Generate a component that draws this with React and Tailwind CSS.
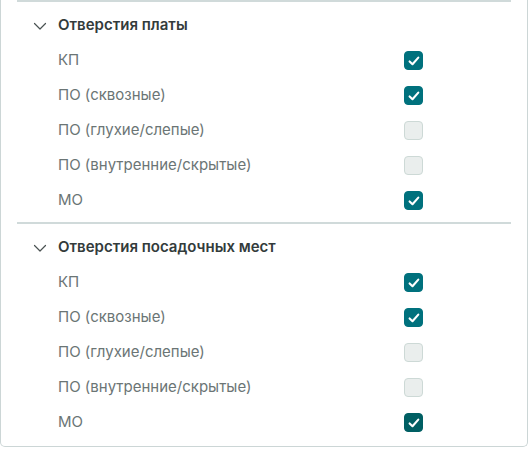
import { useState } from 'react';

const ROWS = [
  { key: 'kp', label: 'КП' },
  { key: 'through', label: 'ПО (сквозные)' },
  { key: 'blind', label: 'ПО (глухие/слепые)' },
  { key: 'buried', label: 'ПО (внутренние/скрытые)' },
  { key: 'mo', label: 'МО' },
];

const SECTIONS = [
  { id: 'board', title: 'Отверстия платы', checked: { kp: true, through: true, mo: true } },
  { id: 'footprint', title: 'Отверстия посадочных мест', checked: { kp: true, through: true, mo: true }, dark: 'mo' },
];

function Checkbox({ checked, dark, onChange }) {
  return (
    <button
      onClick={onChange}
      className={
        'w-[19px] h-[19px] rounded-[4px] flex items-center justify-center border ' +
        (checked
          ? dark
            ? 'bg-[#005f63] border-[#005f63]'
            : 'bg-[#00717d] border-[#00717d]'
          : 'bg-[#eaeeed] border-[#cdd9d6]')
      }
    >
      {checked && (
        <svg width="14" height="14" viewBox="0 0 14 14" fill="none">
          <path d="M2.6 7.4 L5.5 10.2 L11.3 3.6" stroke="white" strokeWidth="2.1" strokeLinecap="round" strokeLinejoin="round" />
        </svg>
      )}
    </button>
  );
}

function Section({ section }) {
  const [open, setOpen] = useState(true);
  const [checked, setChecked] = useState(section.checked);

  return (
    <div className="pt-[6px] pb-[4px]">
      <button
        onClick={() => setOpen(!open)}
        className="h-[35px] flex items-center pl-[32px] gap-[11px] text-[15px] font-semibold text-[#333b3b]"
      >
        <svg width="14" height="14" viewBox="0 0 14 14" fill="none">
          <path d="M1.5 4.5 L7 10 L12.5 4.5" stroke="#4a5252" strokeWidth="1.2" strokeLinecap="round" strokeLinejoin="round" />
        </svg>
        {section.title}
      </button>
      {open && ROWS.map(r => (
        <div key={r.key} className="h-[35px] grid grid-cols-[346px_19px] items-center pl-[57px]">
          <span className="text-[15px] text-[#6b7575]">{r.label}</span>
          <Checkbox
            checked={!!checked[r.key]}
            dark={section.dark === r.key}
            onChange={() => setChecked({ ...checked, [r.key]: !checked[r.key] })}
          />
        </div>
      ))}
    </div>
  );
}

export default function App() {
  return (
    <div className="w-[528px] bg-white border-x border-b border-[#ccd6d6] rounded-b-[5px] pb-[2px]" style={{ fontFamily: 'Inter, "Noto Sans", sans-serif' }}>
      <div className="mx-4 h-[2px] bg-[#d0dada]" />
      <Section section={SECTIONS[0]} />
      <div className="mx-4 h-[2px] bg-[#d0dada]" />
      <Section section={SECTIONS[1]} />
    </div>
  );
}
